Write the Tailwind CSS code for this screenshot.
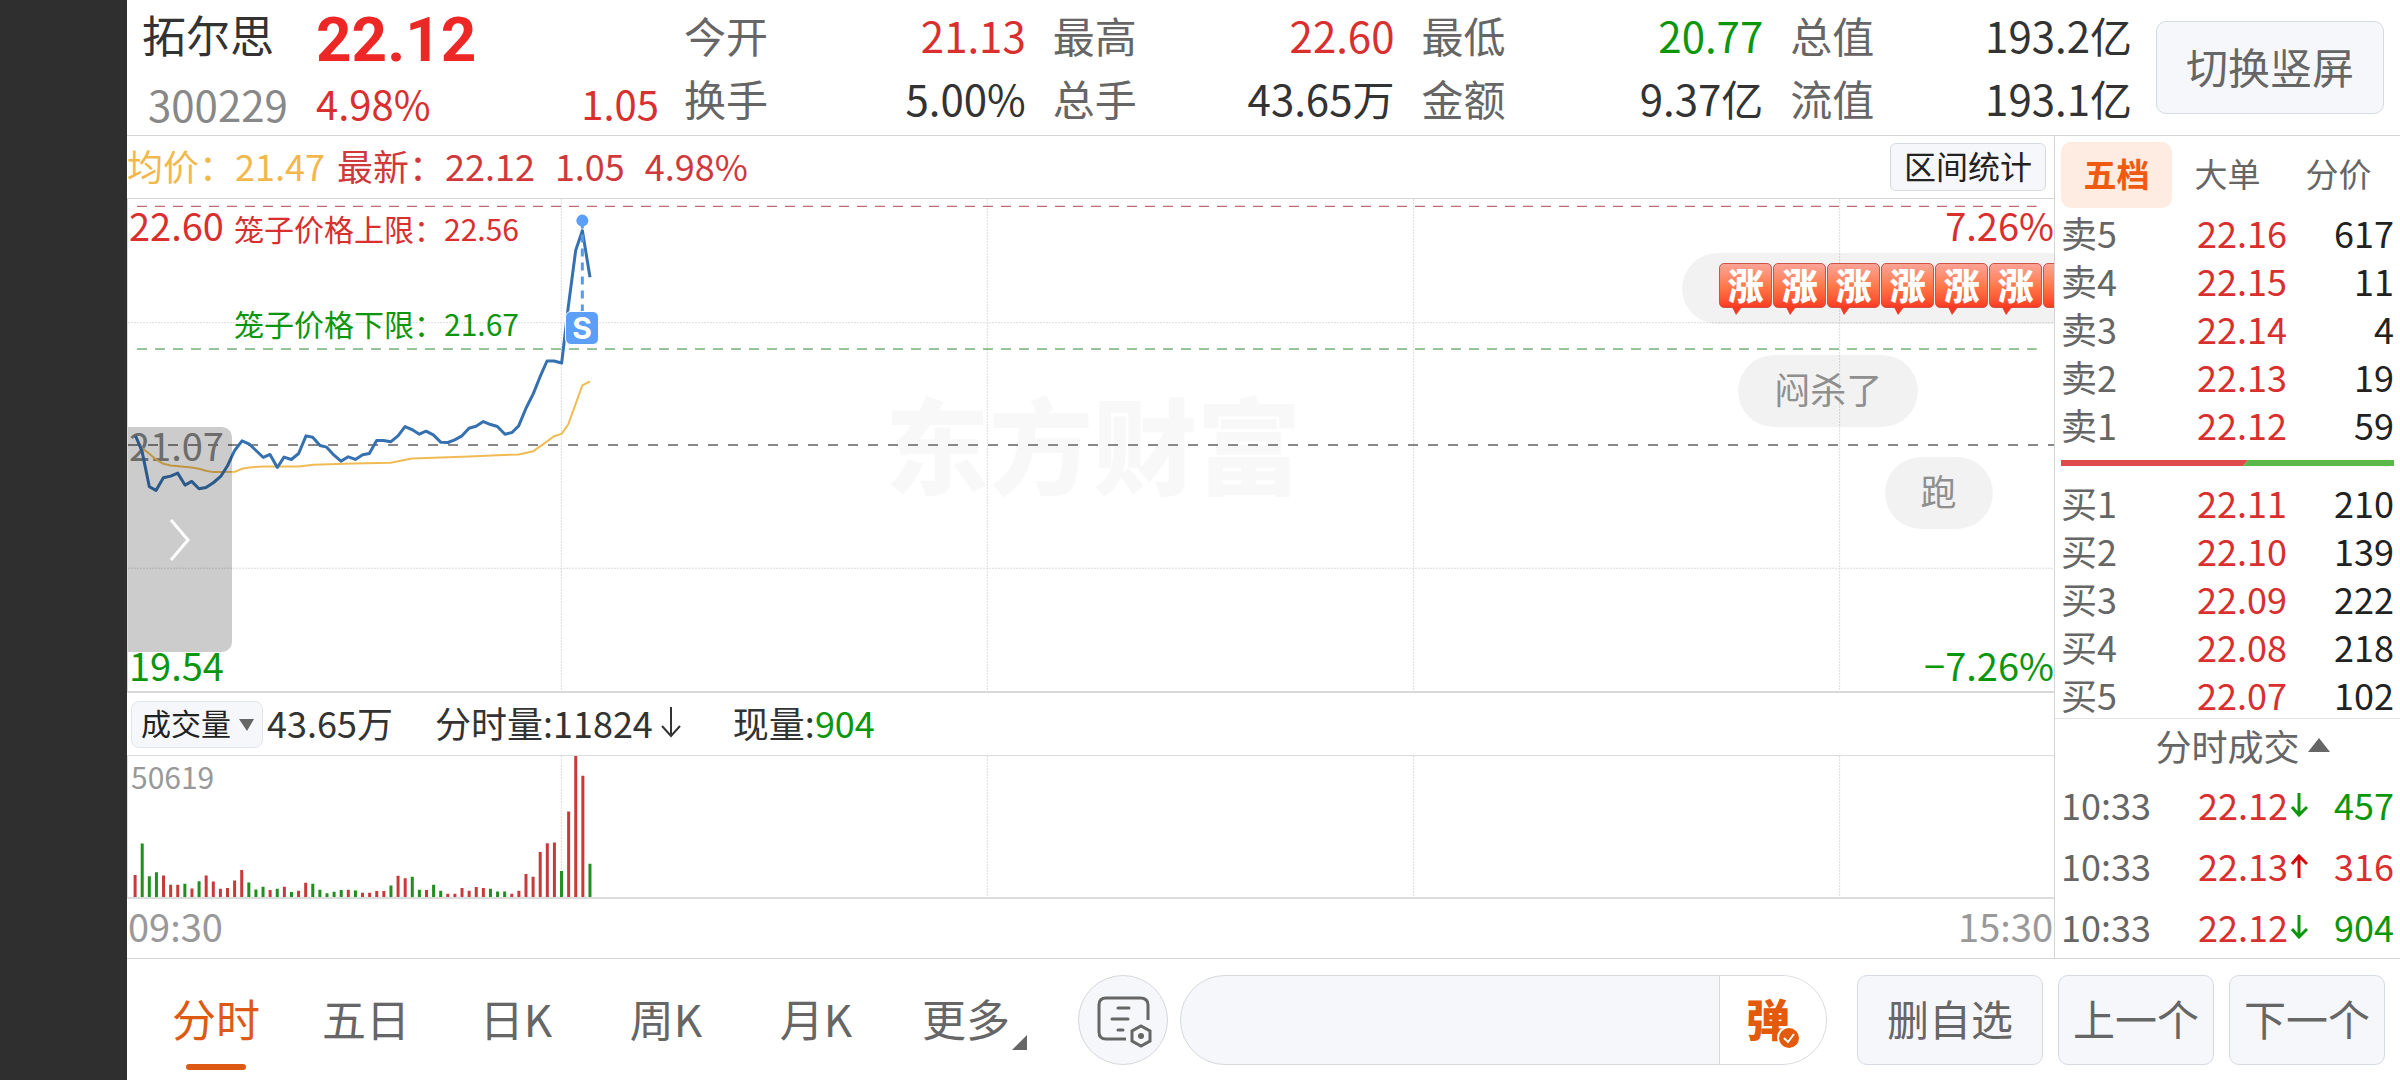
<!DOCTYPE html>
<html lang="zh-CN">
<head>
<meta charset="utf-8">
<meta name="viewport" content="width=device-width, initial-scale=1">
<title>拓尔思 300229</title>
<script src="https://cdn.jsdelivr.net/npm/@tailwindcss/browser@4"></script>
</head>
<body class="flex min-h-screen bg-white font-['Noto_Sans_CJK_SC',sans-serif] text-[#333]">
<div class="w-[127px] shrink-0 bg-[#2f2f2f]"></div>
<div class="flex min-w-0 flex-1 flex-col">

  <header class="flex h-[136px] shrink-0 items-start border-b border-[#d3d5d7] pr-4 pl-[15px]">
    <div class="w-[174px] shrink-0 pt-[3px]">
      <h1 class="text-[44px] leading-[63px]">拓尔思</h1>
      <p class="pl-[6px] text-[42px] leading-[76px] text-[#888]">300229</p>
    </div>
    <div class="w-[343px] shrink-0 pt-[3px] text-[#d92f2f]">
      <p class="font-['Roboto',sans-serif] text-[62px] leading-[74px] font-bold text-[#ed2626]">22.12</p>
      <p class="flex justify-between text-[40px] leading-[52px]"><span>4.98%</span><span>1.05</span></p>
    </div>
    <dl class="ml-[25px] grid flex-1 grid-cols-4 gap-x-[27px] pt-[3px] text-[42px] leading-[63px]">
      <div class="flex justify-between"><dt class="text-[#666]">今开</dt><dd class="text-[#d92f2f]">21.13</dd></div>
      <div class="flex justify-between"><dt class="text-[#666]">最高</dt><dd class="text-[#d92f2f]">22.60</dd></div>
      <div class="flex justify-between"><dt class="text-[#666]">最低</dt><dd class="text-[#0c960c]">20.77</dd></div>
      <div class="flex justify-between"><dt class="text-[#666]">总值</dt><dd>193.2亿</dd></div>
      <div class="flex justify-between"><dt class="text-[#666]">换手</dt><dd>5.00%</dd></div>
      <div class="flex justify-between"><dt class="text-[#666]">总手</dt><dd>43.65万</dd></div>
      <div class="flex justify-between"><dt class="text-[#666]">金额</dt><dd>9.37亿</dd></div>
      <div class="flex justify-between"><dt class="text-[#666]">流值</dt><dd>193.1亿</dd></div>
    </dl>
    <button class="mt-[21px] ml-6 h-[93px] w-[228px] shrink-0 rounded-[10px] border border-[#d5dae0] bg-[#f6f7fa] pb-1 text-[42px] text-[#666]">切换竖屏</button>
  </header>

  <div class="flex flex-1">
    <main class="flex min-w-0 flex-1 flex-col">
      <div class="flex h-[63px] shrink-0 items-center border-b border-[#d3d5d7] pr-2 text-[36px] leading-[56px] text-[#d0393b]">
        <span class="mr-3 pb-1 text-[#f2b84b]">均价：21.47</span>
        <span class="mr-5 pb-1">最新：22.12</span>
        <span class="mr-5 pb-1">1.05</span>
        <span class="pb-1">4.98%</span>
        <button class="ml-auto h-12 w-[156px] rounded-md border border-[#d5dae0] bg-[#f6f7fa] pb-1 text-[32px] leading-[42px] text-[#222]">区间统计</button>
      </div>

      <section class="relative flex-1 border-b-2 border-l border-[#d8d8d8]" aria-label="分时走势">
        <p class="absolute top-[168px] left-[757px] text-[104px] leading-[150px] font-black text-[#f8f8f8]">东方财富</p>
        <svg class="absolute inset-0 size-full" viewBox="24 27 5778 1479" preserveAspectRatio="none" fill="none">
          <g stroke="#dcdcdc" stroke-width="1" stroke-dasharray="2 1">
            <path vector-effect="non-scaling-stroke" d="M24 399H5802M24 1137H5802"/>
            <path vector-effect="non-scaling-stroke" d="M1324 27V1506M2602 27V1506M3881 27V1506M5159 27V1506"/>
          </g>
          <g shape-rendering="crispEdges">
            <path vector-effect="non-scaling-stroke" stroke="#b0484a" stroke-width="1" stroke-dasharray="10 8" d="M51 49H5750"/>
            <path vector-effect="non-scaling-stroke" stroke="#2f8a36" stroke-width="1" stroke-dasharray="10 8" d="M51 478H5750"/>
            <path vector-effect="non-scaling-stroke" stroke="#888" stroke-width="2" stroke-dasharray="10 10" d="M24 768H5802"/>
          </g>
        </svg>
        <p class="absolute top-0 left-px text-[38px] leading-[52px] text-[#d92f2f]">22.60</p>
        <p class="absolute top-[220px] left-px text-[38px] leading-[52px] text-[#888]">21.07</p>
        <p class="absolute bottom-0 left-px text-[38px] leading-[52px] text-[#0c960c]">19.54</p>
        <p class="absolute top-0 right-0 text-[38px] leading-[52px] text-[#d92f2f]">7.26%</p>
        <p class="absolute right-0 bottom-0 text-[38px] leading-[52px] text-[#0c960c]">−7.26%</p>
        <p class="absolute top-[7px] left-[106px] text-[30px] leading-[44px] text-[#d92f2f]">笼子价格上限：22.56</p>
        <p class="absolute top-[102px] left-[106px] text-[30px] leading-[44px] text-[#0c960c]">笼子价格下限：21.67</p>
        <svg class="absolute inset-0 size-full" viewBox="24 27 5778 1479" preserveAspectRatio="none" fill="none" stroke-linejoin="round">
          <path vector-effect="non-scaling-stroke" stroke="#f0bb55" stroke-width="2" d="M46 738L66 776 88 793 108 810 130 823 152 828 215 834 237 838 258 844 280 848 345 847 366 838 388 834 430 831 536 831 580 826 700 822 812 820 876 807 962 804 1047 801 1132 797 1196 795 1240 785 1270 764 1302 740 1325 733 1345 704 1367 643 1387 587 1410 575"/>
          <path vector-effect="non-scaling-stroke" stroke="#3570b0" stroke-width="3" d="M46 738L66 785 88 892 108 903 130 865 152 860 173 851 195 887 215 876 237 898 258 894 280 880 302 861 323 828 344 783 366 754 388 764 408 783 430 804 450 795 472 834 492 803 514 810 536 792 558 739 578 743 600 768 620 773 642 797 663 815 685 802 706 810 728 796 748 792 770 753 790 753 812 757 834 739 855 711 876 720 898 734 918 725 940 736 962 758 984 759 1004 751 1026 739 1047 716 1068 710 1090 696 1112 705 1132 711 1155 734 1176 729 1196 709 1218 656 1240 612 1260 562 1281 514 1302 514 1325 520 1345 350 1367 182 1387 122 1410 262"/>
          <path vector-effect="non-scaling-stroke" stroke="#5b9ae6" stroke-width="3" stroke-dasharray="8 6" d="M1387 92V365"/>
          <path vector-effect="non-scaling-stroke" stroke="#5c9ff8" stroke-width="12" stroke-linecap="round" d="M1387 92V92"/>
        </svg>
        <span class="absolute top-[112px] left-[437px] flex size-[34px] items-center justify-center rounded-md border border-white bg-[#5c9ff8] font-['Inter',sans-serif] text-[30px] leading-none font-bold text-white">S</span>

        <div class="pointer-events-none absolute inset-0 overflow-hidden">
          <div class="absolute top-[54px] left-[80.7%] flex h-[71px] w-[480px] items-start rounded-full bg-black/5 pt-[10px] pl-[37px] text-[36px] leading-[41px] font-black text-white">
            <span class="relative mr-px flex h-[45px] w-[53px] shrink-0 justify-center rounded-[5px] border border-[#cf5346] bg-linear-to-b from-[#fba396] via-[#ff7a4b] to-[#fb3a22]">涨<svg class="absolute top-[43px] left-3 h-2 w-[10px]" viewBox="0 0 10 8"><path fill="#f23a24" d="M0 0H10L4 8Z"/></svg></span>
            <span class="relative mr-px flex h-[45px] w-[53px] shrink-0 justify-center rounded-[5px] border border-[#cf5346] bg-linear-to-b from-[#fba396] via-[#ff7a4b] to-[#fb3a22]">涨<svg class="absolute top-[43px] left-3 h-2 w-[10px]" viewBox="0 0 10 8"><path fill="#f23a24" d="M0 0H10L4 8Z"/></svg></span>
            <span class="relative mr-px flex h-[45px] w-[53px] shrink-0 justify-center rounded-[5px] border border-[#cf5346] bg-linear-to-b from-[#fba396] via-[#ff7a4b] to-[#fb3a22]">涨<svg class="absolute top-[43px] left-3 h-2 w-[10px]" viewBox="0 0 10 8"><path fill="#f23a24" d="M0 0H10L4 8Z"/></svg></span>
            <span class="relative mr-px flex h-[45px] w-[53px] shrink-0 justify-center rounded-[5px] border border-[#cf5346] bg-linear-to-b from-[#fba396] via-[#ff7a4b] to-[#fb3a22]">涨<svg class="absolute top-[43px] left-3 h-2 w-[10px]" viewBox="0 0 10 8"><path fill="#f23a24" d="M0 0H10L4 8Z"/></svg></span>
            <span class="relative mr-px flex h-[45px] w-[53px] shrink-0 justify-center rounded-[5px] border border-[#cf5346] bg-linear-to-b from-[#fba396] via-[#ff7a4b] to-[#fb3a22]">涨<svg class="absolute top-[43px] left-3 h-2 w-[10px]" viewBox="0 0 10 8"><path fill="#f23a24" d="M0 0H10L4 8Z"/></svg></span>
            <span class="relative mr-px flex h-[45px] w-[53px] shrink-0 justify-center rounded-[5px] border border-[#cf5346] bg-linear-to-b from-[#fba396] via-[#ff7a4b] to-[#fb3a22]">涨<svg class="absolute top-[43px] left-3 h-2 w-[10px]" viewBox="0 0 10 8"><path fill="#f23a24" d="M0 0H10L4 8Z"/></svg></span>
            <span class="h-[45px] w-[53px] shrink-0 rounded-[5px] border border-[#cf5346] bg-linear-to-b from-[#fba396] via-[#ff7a4b] to-[#fb3a22]"></span>
          </div>
          <p class="absolute top-[156px] left-[83.6%] h-[72px] rounded-full bg-black/5 px-9 text-[36px] leading-[66px] text-[#8f8f8f]">闷杀了</p>
          <p class="absolute top-[258px] left-[91.2%] h-[72px] rounded-full bg-black/5 px-9 text-[36px] leading-[66px] text-[#8f8f8f]">跑</p>
        </div>

        <button class="absolute top-[228px] left-0 flex h-[225px] w-[104px] items-center justify-center rounded-r-[10px] bg-black/20" aria-label="展开">
          <svg class="h-11 w-6" viewBox="0 0 24 44" fill="none" stroke="#fff" stroke-width="3"><path d="M3 2L20 22 3 42"/></svg>
        </button>
      </section>

      <div class="flex h-[62px] shrink-0 items-center pl-1 text-[36px] leading-[56px]">
        <label class="relative mr-1 flex h-[47px] w-[132px]">
          <select class="size-full appearance-none rounded-lg border border-[#e2e5ea] bg-[#f6f7fa] pb-1 pl-[9px] text-[30px] leading-[40px] text-[#222]" aria-label="指标"><option>成交量</option></select>
          <svg class="pointer-events-none absolute top-[18px] right-[9px] h-3 w-[15px]" viewBox="0 0 15 12"><path fill="#666" d="M0 0H15L8 12Z"/></svg>
        </label>
        <span class="mr-[42px] pb-1">43.65万</span>
        <span class="flex items-center pb-1">分时量:11824<svg class="mr-11 h-8 w-9" viewBox="0 0 36 32" fill="none" stroke="#333" stroke-width="2"><path d="M18 1V30M9 20L18 30 27 20"/></svg></span>
        <span class="pb-1">现量:<span class="text-[#0c960c]">904</span></span>
      </div>

      <section class="relative h-[144px] shrink-0 overflow-hidden border-t border-b-2 border-l border-[#dcdcdc]" aria-label="成交量">
        <svg class="absolute inset-0 size-full" viewBox="24 0 5778 10" preserveAspectRatio="none" fill="none">
          <path vector-effect="non-scaling-stroke" stroke="#dcdcdc" stroke-dasharray="2 1" d="M1324 0V10M2602 0V10M3881 0V10M5159 0V10"/>
        </svg>
        <svg id="volume" class="absolute inset-0 size-full" viewBox="0 0 271 427" preserveAspectRatio="none"></svg>
        <p class="absolute top-0 left-[3px] text-[30px] leading-10 text-[#999]">50619</p>
      </section>
      <div class="flex h-[59px] shrink-0 items-center justify-between px-px pb-[6px] text-[38px] leading-[52px] text-[#999]"><span>09:30</span><span>15:30</span></div>
    </main>

    <aside class="w-[346px] shrink-0 border-l border-[#d3d5d7] pt-[6px] pr-[6px] pl-[6px]">
      <div class="grid h-[66px] grid-cols-3 text-[33px] leading-[60px] text-[#666]" role="tablist">
        <button class="rounded-[10px] bg-[#feece3] pb-1 font-bold text-[#f05a10]" role="tab">五档</button>
        <button class="pb-1" role="tab">大单</button>
        <button class="pb-1" role="tab">分价</button>
      </div>
      <table class="w-full table-fixed text-[36px] leading-[48px]">
        <tbody>
          <tr><td class="w-[90px] text-[#666]">卖5</td><td class="w-[136px] text-right text-[#d92f2f]">22.16</td><td class="text-right text-[#222]">617</td></tr>
          <tr><td class="text-[#666]">卖4</td><td class="text-right text-[#d92f2f]">22.15</td><td class="text-right text-[#222]">11</td></tr>
          <tr><td class="text-[#666]">卖3</td><td class="text-right text-[#d92f2f]">22.14</td><td class="text-right text-[#222]">4</td></tr>
          <tr><td class="text-[#666]">卖2</td><td class="text-right text-[#d92f2f]">22.13</td><td class="text-right text-[#222]">19</td></tr>
          <tr><td class="text-[#666]">卖1</td><td class="text-right text-[#d92f2f]">22.12</td><td class="text-right text-[#222]">59</td></tr>
        </tbody>
      </table>
      <svg class="my-3 h-[6px] w-full" viewBox="0 0 333 6" preserveAspectRatio="none"><path fill="#e14a4a" d="M0 0H187L182 6H0Z"/><path fill="#5bb84a" d="M187 0H333V6H182Z"/></svg>
      <table class="w-full table-fixed text-[36px] leading-[48px]">
        <tbody>
          <tr><td class="w-[90px] text-[#666]">买1</td><td class="w-[136px] text-right text-[#d92f2f]">22.11</td><td class="text-right text-[#222]">210</td></tr>
          <tr><td class="text-[#666]">买2</td><td class="text-right text-[#d92f2f]">22.10</td><td class="text-right text-[#222]">139</td></tr>
          <tr><td class="text-[#666]">买3</td><td class="text-right text-[#d92f2f]">22.09</td><td class="text-right text-[#222]">222</td></tr>
          <tr><td class="text-[#666]">买4</td><td class="text-right text-[#d92f2f]">22.08</td><td class="text-right text-[#222]">218</td></tr>
          <tr><td class="text-[#666]">买5</td><td class="text-right text-[#d92f2f]">22.07</td><td class="text-right text-[#222]">102</td></tr>
        </tbody>
      </table>
      <button class="-mx-[6px] flex h-14 w-[345px] items-center justify-center gap-2 border-t border-[#e4e4e4] pb-1 pl-[30px] text-[36px] leading-[50px] text-[#666]">分时成交<svg class="h-[14px] w-[22px]" viewBox="0 0 22 14"><path fill="#666" d="M11 0L22 14H0Z"/></svg></button>
      <table class="w-full table-fixed text-[36px] leading-[61px]">
        <tbody>
          <tr><td class="w-[110px] text-[#666]">10:33</td><td class="w-[117px] text-right text-[#d92f2f]">22.12</td><td class="text-right text-[#0c960c]"><span class="flex items-center justify-between"><svg class="ml-[3px] h-6 w-[17px]" viewBox="0 0 17 24" fill="none" stroke="currentColor" stroke-width="3"><path d="M8 0V22M1 14L8 22 16 14"/></svg>457</span></td></tr>
          <tr><td class="text-[#666]">10:33</td><td class="text-right text-[#d92f2f]">22.13</td><td class="text-right text-[#d92f2f]"><span class="flex items-center justify-between"><svg class="ml-[3px] h-6 w-[17px]" viewBox="0 0 17 24" fill="none" stroke="#d60a0a" stroke-width="3"><path d="M8 24V2M1 10L8 2 16 10"/></svg>316</span></td></tr>
          <tr><td class="text-[#666]">10:33</td><td class="text-right text-[#d92f2f]">22.12</td><td class="text-right text-[#0c960c]"><span class="flex items-center justify-between"><svg class="ml-[3px] h-6 w-[17px]" viewBox="0 0 17 24" fill="none" stroke="currentColor" stroke-width="3"><path d="M8 0V22M1 14L8 22 16 14"/></svg>904</span></td></tr>
        </tbody>
      </table>
    </aside>
  </div>

  <footer class="flex h-[122px] shrink-0 items-center border-t border-[#d3d5d7] pr-[15px] pl-[14px] text-[#666]">
    <nav class="mr-[37px] grid w-[900px] shrink-0 grid-cols-6 text-center text-[44px] leading-[112px]">
      <a href="#" class="relative pb-1 text-[#dd5a14]">分时<span class="absolute bottom-2 left-[45px] h-[6px] w-[60px] rounded-full bg-[#dd5a14]"></span></a>
      <a href="#">五日</a>
      <a href="#">日K</a>
      <a href="#">周K</a>
      <a href="#">月K</a>
      <a href="#" class="relative">更多<svg class="absolute right-[14px] bottom-7 size-[15px]" viewBox="0 0 15 15"><path fill="#666" d="M15 0V15H0Z"/></svg></a>
    </nav>
    <button class="flex size-[90px] shrink-0 items-center justify-center rounded-full border border-[#d5d7dc] bg-[#f6f7fa]" aria-label="设置">
      <svg class="mt-1 ml-1 h-[52px] w-[56px]" viewBox="0 0 56 52" fill="none" stroke="#666" stroke-width="3">
        <path d="M29 43H9Q2 43 2 36V9Q2 2 9 2H43Q51 2 51 9V24"/>
        <path stroke-linecap="round" d="M21 12H32M15 23H31M21 34H26"/>
        <path d="M44 30L53 35V45L44 50 35 45V35Z"/>
        <circle cx="44" cy="40" r="3" fill="#666" stroke="none"/>
      </svg>
    </button>
    <div class="mr-[30px] ml-3 flex h-[90px] min-w-0 flex-1 overflow-hidden rounded-full border border-[#d5d7dc] bg-[#f6f7fa]">
      <input type="text" class="min-w-0 flex-1 px-10 text-[36px] outline-none" aria-label="弹幕">
      <button class="flex w-[107px] shrink-0 items-center border-l border-[#d5d7dc] bg-white pb-1 pl-[26px]" aria-label="弹幕开关">
        <span class="relative text-[44px] leading-[80px] font-black text-[#e35a0a]">弹<svg class="absolute right-[-11px] bottom-2 size-6" viewBox="0 0 24 24"><circle cx="12" cy="12" r="11" fill="#e35a0a" stroke="#fff" stroke-width="2"/><path d="M7 12L11 16 17 8" fill="none" stroke="#fff" stroke-width="2"/></svg></span>
      </button>
    </div>
    <div class="flex shrink-0 gap-[15px] text-[42px]">
      <button class="h-[90px] w-[186px] rounded-[10px] border border-[#d5dae0] bg-[#f6f7fa] pb-1">删自选</button>
      <button class="h-[90px] w-[156px] rounded-[10px] border border-[#d5dae0] bg-[#f6f7fa] pb-1">上一个</button>
      <button class="h-[90px] w-[156px] rounded-[10px] border border-[#d5dae0] bg-[#f6f7fa] pb-1">下一个</button>
    </div>
  </footer>
</div>
<script>
  // One bar per minute: height followed by r (up) or g (down); the session has 271 minutes.
  const bars = "67r 162g 63g 75g 65r 37r 37r 40g 26r 48g 65r 47r 25r 27r 50r 82r 44g 23g 31g 21r 25g 31r 15g 19r 43r 40g 22g 11g 16g 21g 22r 20g 13r 13r 18r 18r 35g 64r 57r 61g 22g 21r 37g 19g 10r 10r 27r 19r 30r 27r 25g 17g 17g 10r 19r 70r 61r 136r 163r 165r 79g 259r 427r 367r 101g".split(" ");
  const path = { r: "", g: "" };
  bars.forEach((bar, i) => { path[bar.slice(-1)] += `M${i + 1} 427v-${bar.slice(0, -1)}`; });
  document.getElementById("volume").innerHTML =
    `<path d="${path.r}" stroke="#c83a3a" stroke-width="3" vector-effect="non-scaling-stroke"/>` +
    `<path d="${path.g}" stroke="#1f8f1f" stroke-width="3" vector-effect="non-scaling-stroke"/>`;
</script>
</body>
</html>
